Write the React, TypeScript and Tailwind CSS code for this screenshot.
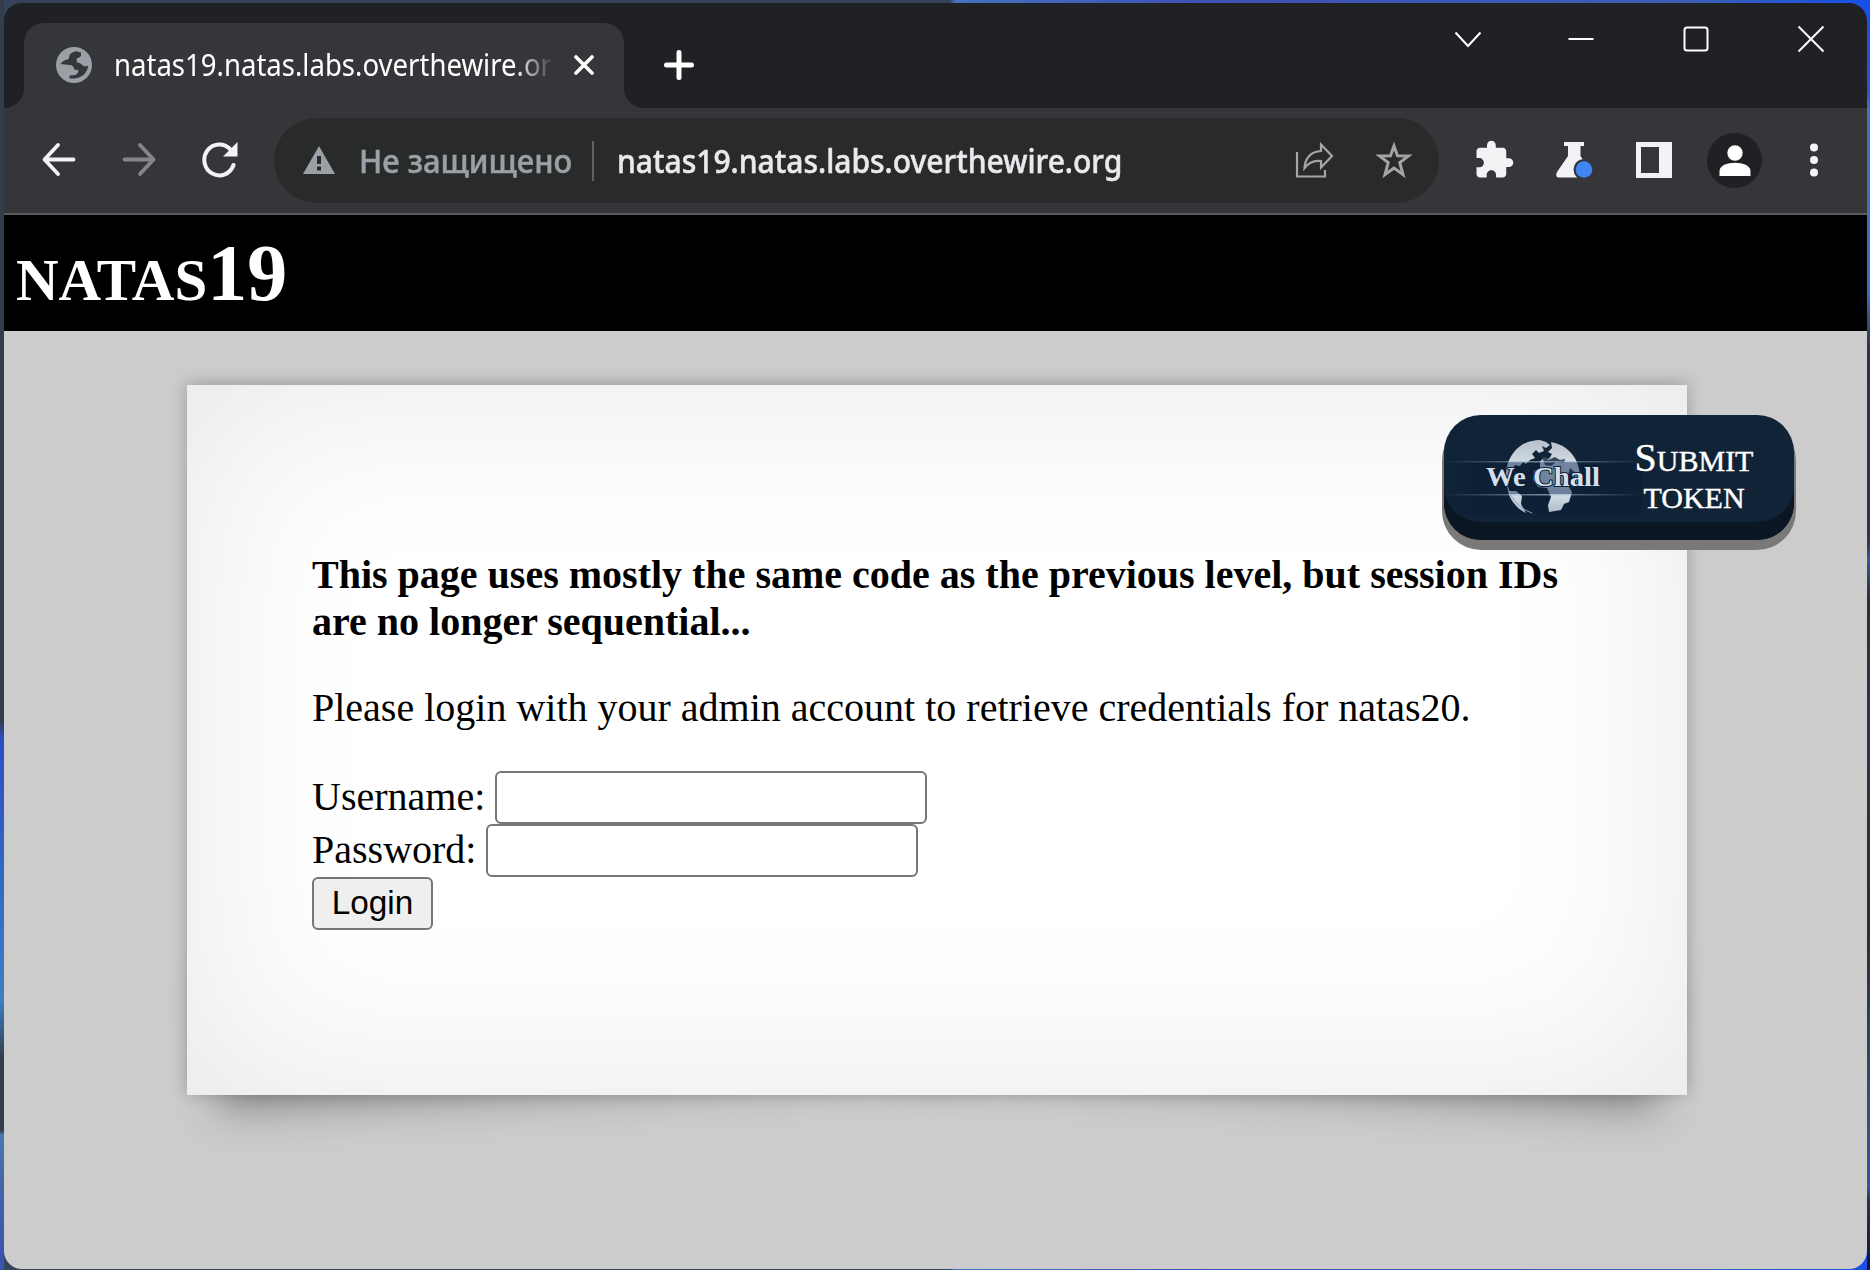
import React from "react";

const CHROME_FONT = "font-['Noto_Sans','Open_Sans',sans-serif]";

function TabStrip() {
  return (
    <div className="flex h-[105px] shrink-0 items-start bg-[#202124]">
      <div className="flex h-[105px] w-5 shrink-0 items-end bg-[#35363a]">
        <div className="h-[105px] w-5 rounded-br-[20px] bg-[#202124]" />
      </div>
      <div className="mt-5 flex h-[85px] w-[600px] shrink-0 items-center rounded-t-[20px] bg-[#35363a] pb-px pl-8">
        <svg width="36" height="36" viewBox="0 0 36 36" className="shrink-0">
          <circle cx="18" cy="18" r="18" fill="#9aa0a6" />
          <path d="M20 4.200C15 5 13 8 13 11L12 12.500C9 12.500 7 14 4.500 17L14 18C17 18.500 18 20 18 22.500L22 23C23 24 22 27 19 28L14 28.500L13 31C23 33.500 32 27 32 18.500C31 19 29 20 27.500 19C25.500 17.500 24 15.500 21 15.500L20.500 12C22 10.500 24 10.500 25 9L25 5.500Z" fill="#35363a" />
        </svg>
        <div className={"ml-[22px] w-[440px] overflow-hidden whitespace-nowrap text-[30px] leading-[44px] text-white [mask-image:linear-gradient(to_right,black_400px,transparent_440px)] " + CHROME_FONT}>
          <span className="inline-block origin-left scale-x-[0.918]">natas19.natas.labs.overthewire.org</span>
        </div>
        <svg width="20" height="20" viewBox="0 0 20 20" className="ml-5 shrink-0" stroke="#fff" strokeWidth="3.600" strokeLinecap="round">
          <path d="M2 2L18 18M18 2L2 18" />
        </svg>
      </div>
      <div className="h-[105px] w-5 shrink-0 bg-[#35363a]">
        <div className="h-[105px] w-5 rounded-bl-[20px] bg-[#202124]" />
      </div>
      <svg width="30" height="30" viewBox="0 0 30 30" className="ml-5 mt-[47px]" stroke="#fff" strokeWidth="5" strokeLinecap="round">
        <path d="M15 2.500V27.500M2.500 15H27.500" />
      </svg>
      <div className="ml-auto flex pt-[21px]">
        <svg width="30" height="30" viewBox="0 0 30 30" className="mr-[83px]" fill="none" stroke="#fff" strokeWidth="2"><path d="M2.500 8.500L15 22L27.500 8.500" /></svg>
        <svg width="30" height="30" viewBox="0 0 30 30" className="mr-[85px]" stroke="#fff" strokeWidth="2"><path d="M2.500 15H27.500" /></svg>
        <svg width="30" height="30" viewBox="0 0 30 30" className="mr-[85px]" fill="none" stroke="#fff" strokeWidth="2"><rect x="3.500" y="3.500" width="23" height="23" rx="2.500" /></svg>
        <svg width="30" height="30" viewBox="0 0 30 30" className="mr-[41px]" stroke="#fff" strokeWidth="2"><path d="M2.500 2.500L27.500 27.500M27.500 2.500L2.500 27.500" /></svg>
      </div>
    </div>
  );
}

function Toolbar() {
  return (
    <div className="flex h-[107px] shrink-0 items-center border-b-2 border-[#5b5c60] bg-[#35363a] [&>svg]:mb-px">
      <svg width="36" height="36" viewBox="0 0 36 36" className="ml-9 shrink-0" fill="none" stroke="#f1f3f4" strokeWidth="3.800" strokeLinecap="round" strokeLinejoin="round"><path d="M33.500 17.500H4.500M18 3L4.500 17.500L18 32" /></svg>
      <svg width="36" height="36" viewBox="0 0 36 36" className="ml-[45px] shrink-0" fill="none" stroke="#85868a" strokeWidth="3.800" strokeLinecap="round" strokeLinejoin="round"><path d="M3.500 17.500H32.500M19 3L32.500 17.500L19 32" /></svg>
      <svg width="36" height="38" viewBox="0 0 36 38" className="ml-[45px] shrink-0" fill="none" stroke="#f1f3f4" strokeWidth="4"><path d="M31.500 24A15 15.500 0 1 1 28 8" strokeLinecap="round" /><path d="M35.500 1V15.500H21Z" fill="#f1f3f4" stroke="none" /></svg>
      <div className={"ml-9 flex h-[85px] w-[1165px] shrink-0 items-center rounded-full bg-[#292a2a] text-[32px] font-medium [-webkit-text-stroke:0.5px] [&>svg]:mb-px " + CHROME_FONT}>
        <svg width="32" height="28" viewBox="0 0 32 28" className="ml-[29px] shrink-0"><path d="M16 0L32 28H0Z" fill="#9aa0a6" /><path d="M14 10H18V18H14ZM14 20.500H18V24.500H14Z" fill="#292a2a" /></svg>
        <div className="ml-6 w-[213px] shrink-0 whitespace-nowrap text-[#9aa0a6]"><span className="inline-block origin-left scale-x-[0.967]">Не защищено</span></div>
        <div className="ml-5 h-10 w-0.5 shrink-0 bg-[#5f6063]" />
        <div className="ml-[23px] w-[510px] shrink-0 whitespace-nowrap text-[#e8eaed]"><span className="inline-block origin-left scale-x-[0.938]">natas19.natas.labs.overthewire.org</span></div>
        <svg width="40" height="40" viewBox="0 0 40 40" className="ml-[167px] shrink-0" fill="none" stroke="#a5a5a5" strokeWidth="2.200"><path d="M3 12V36.500H31V30" /><path d="M27 4.500L38 16L27 27.500V21C20 20 15 22 10.500 28C11 18 17 11.500 27 11Z" /></svg>
        <svg width="38" height="38" viewBox="0 0 38 38" className="ml-[41px] shrink-0" fill="none" stroke="#a5a5a5" strokeWidth="3"><path d="M19 5L22.500 14.700L33.500 15L24.800 21.600L28 33.500L19 27L10 33.500L13.200 21.600L4.500 15L15.500 14.700Z" /></svg>
      </div>
      <svg width="42" height="42" viewBox="0 0 24 24" className="ml-[34px] shrink-0" fill="#f1f3f4"><path d="M20.500 11H19V7c0-1.100-.9-2-2-2h-4V3.500a2.500 2.500 0 0 0-5 0V5H4c-1.100 0-1.990.9-1.990 2v3.800H3.500c1.490 0 2.700 1.210 2.700 2.700s-1.210 2.700-2.700 2.700H2V20c0 1.100.9 2 2 2h3.800v-1.500c0-1.490 1.210-2.700 2.700-2.700s2.700 1.210 2.700 2.700V22H17c1.100 0 2-.9 2-2v-4h1.500a2.500 2.500 0 0 0 0-5z" /></svg>
      <svg width="38" height="38" viewBox="0 0 38 38" className="ml-[41px] shrink-0"><path d="M8 1H28V5H24.500V15L35 31Q37 36.500 32 36.500H4Q-1.500 36.500 1 31L12 15V5H8Z" fill="#f1f3f4" /><circle cx="28" cy="28.500" r="10.500" fill="#35363a" /><circle cx="28" cy="28.500" r="8.300" fill="#4285f4" /></svg>
      <div className="mb-px ml-[42px] flex h-9 w-9 shrink-0 bg-[#f1f3f4] p-[5px]"><div className="h-[26px] w-[18px] bg-[#35363a]" /></div>
      <div className="ml-[35px] flex h-[55px] w-[55px] shrink-0 items-center justify-center rounded-full bg-[#202124]">
        <svg width="32" height="32" viewBox="0 0 32 32" fill="#fff"><circle cx="16" cy="8" r="7.700" /><path d="M.5 31V26C.5 15 31.500 15 31.500 26V31Z" /></svg>
      </div>
      <svg width="8" height="34" viewBox="0 0 8 34" className="ml-12 shrink-0" fill="#f1f3f4"><circle cx="4" cy="4.500" r="4" /><circle cx="4" cy="17" r="4" /><circle cx="4" cy="29.500" r="4" /></svg>
    </div>
  );
}

function WeChallLogo() {
  return (
    <svg width="198" height="75" viewBox="0 0 198 75" className="shrink-0">
      <defs>
        <linearGradient id="land" gradientUnits="userSpaceOnUse" x1="0" y1="0" x2="0" y2="75"><stop offset="0" stopColor="#b7c1cd" /><stop offset=".29" stopColor="#d0d8e0" /><stop offset=".291" stopColor="#7185a0" /><stop offset=".72" stopColor="#6d819c" /><stop offset=".721" stopColor="#d5dde5" /><stop offset="1" stopColor="#aab7c6" /></linearGradient>
        <linearGradient id="beam"><stop offset="0" stopColor="#9fb6d0" stopOpacity="0" /><stop offset=".5" stopColor="#9fb6d0" stopOpacity=".7" /><stop offset="1" stopColor="#9fb6d0" stopOpacity="0" /></linearGradient>
        <linearGradient id="plate"><stop offset="0" stopColor="#0d1f34" stopOpacity="0" /><stop offset=".15" stopColor="#0d1f34" stopOpacity=".8" /><stop offset="1" stopColor="#0d1f34" stopOpacity=".8" /></linearGradient>
      </defs>
      <rect y="22" width="198" height="53" fill="url(#plate)" />
      <path fill="url(#land)" d="M62 37C61 27 66 14 75 7C81 2 89 0 96 0L102 2L106 5L102 8L98 6L100 11L95 13L92 10L88 14L91 18L86 20L82 24L79 22L76 26L71 25L68 29L66 34L63 43ZM96 22L100 17L105 19L108 14L104 12L108 8L107 2C125 5 136 20 136 37L133 45L130 36L126 33L122 36L123 44L128 52L125 62L120 64L117 70L105 72L104 65L107 57L103 48L94 47L89 40L90 31L96 28ZM64 51L72 51L78 56L77 64L82 73C73 69 66 60 64 51ZM86 73L95 75L90 74Z" />
      <path d="M97 15L101 12L104 20L111 17L116 20L121 19L120 23L112 22L107 26L101 25ZM126 28L132 33L127 40L124 35Z" fill="#13263c" opacity=".8" />
      <path d="M64 27A37 37 0 0 0 88 73" fill="none" stroke="#8fa0b4" />
      <rect y="21" width="198" height="1.500" fill="url(#beam)" />
      <rect y="54" width="198" height="1.500" fill="url(#beam)" />
      <text x="42" y="46" fill="#d5dfec" stroke="#0d1f34" strokeWidth="2" paintOrder="stroke" fontFamily="'Liberation Serif',serif" fontWeight="700" fontSize="27.500" textLength="114" lengthAdjust="spacingAndGlyphs">We Chall</text>
    </svg>
  );
}

function Page() {
  return (
    <div className="flex flex-1 flex-col bg-[#cccccc] font-['Liberation_Serif',serif] text-[40px] leading-[46px] text-black">
      <h1 className="h-[116px] bg-black pl-3 pt-[12px] text-[80px] font-bold leading-[92px] text-white [font-variant:small-caps]"><span className="text-[84.500px] leading-none">natas</span>19</h1>
      <div className="relative isolate ml-[183px] mt-[54px] h-[710px] w-[1500px]">
        <div className="absolute bottom-[37px] left-[25px] -z-10 h-[142px] w-[750px] -rotate-3 shadow-[0_32px_42px_rgba(0,0,0,0.34)]" />
        <div className="absolute bottom-[37px] right-[25px] -z-10 h-[142px] w-[750px] rotate-3 shadow-[0_32px_42px_rgba(0,0,0,0.34)]" />
        <div className="h-full bg-white px-[125px] pt-[166px] shadow-[0_-2px_15px_rgba(0,0,0,0.24),inset_0_0_190px_rgba(0,0,0,0.1)]">
          <p className="w-[1250px] whitespace-nowrap font-bold leading-[47px]">This page uses mostly the same code as the previous level, but session IDs<br />are no longer sequential...</p>
          <p className="mt-10 whitespace-nowrap">Please login with your admin account to retrieve credentials for natas20.</p>
          <div className="mt-10 flex h-[53px] items-center"><label className="mr-[10px] pb-0.5">Username:</label><input className="h-[53px] w-[432px] rounded-md border-2 border-[#767676] bg-white" /></div>
          <div className="flex h-[53px] items-center"><label className="mr-[10px] pb-0.5">Password:</label><input className="h-[53px] w-[432px] rounded-md border-2 border-[#767676] bg-white" /></div>
          <button className="block h-[53px] w-[121px] rounded-md border-2 border-[#767676] bg-[#efefef] pb-0.5 font-['Liberation_Sans',sans-serif] text-[33.333px] leading-[46px]">Login</button>
        </div>
        <div className="absolute left-[1257px] top-[30px] flex h-[125px] w-[350px] rounded-[37px] bg-[#112437] pt-[25px] shadow-[inset_0_-18px_0_#0a1621,0_8px_0_2px_#7b7878]">
          <WeChallLogo />
          <div className="-ml-[11px] -mt-px flex w-[126px] shrink-0 flex-col items-center leading-[36px] text-white [-webkit-text-stroke:0.4px] [font-variant:small-caps]">
            <div className="h-9 whitespace-nowrap">S<span className="text-[42.500px]">ubmit</span></div>
            <div className="h-9 whitespace-nowrap text-[43.500px]">token</div>
          </div>
        </div>
      </div>
    </div>
  );
}

export default function App() {
  return (
    <div className="h-[1270px] w-[1870px] overflow-hidden bg-[linear-gradient(90deg,#35445a_0,#35445a_950px,#4472bd_955px,#3f51b5_1200px,#3a5fb5_1700px,#164fe8_1870px)]">
      <div className="h-[1270px] w-[1870px] bg-[linear-gradient(180deg,#343b49_0,#343b49_720px,#2a4fc4_740px,#3a7fc4_1000px,#343b49_1060px,#343b49_1130px,#4a79ad_1135px,#4466a8_1180px,#3a52b0_1270px),linear-gradient(180deg,#164fe8_0,#2a55d0_90px,#4472bd_110px,#3f6cc0_290px,#303048_350px,#34344c_540px,#3a52a0_560px,#2c2e36_600px,#303448_720px,#2c2e30_930px,#2e5088_1110px,#3a52a0_1188px,#2c3050_1200px,#12143a_1270px)] bg-[length:4px_1270px,3px_1270px] bg-[position:left_top,right_top] bg-no-repeat pl-1 pr-[3px] pt-[3px]">
        <div className="flex h-[1266px] w-[1863px] flex-col overflow-hidden rounded-[18px]">
          <TabStrip />
          <Toolbar />
          <Page />
        </div>
      </div>
    </div>
  );
}
